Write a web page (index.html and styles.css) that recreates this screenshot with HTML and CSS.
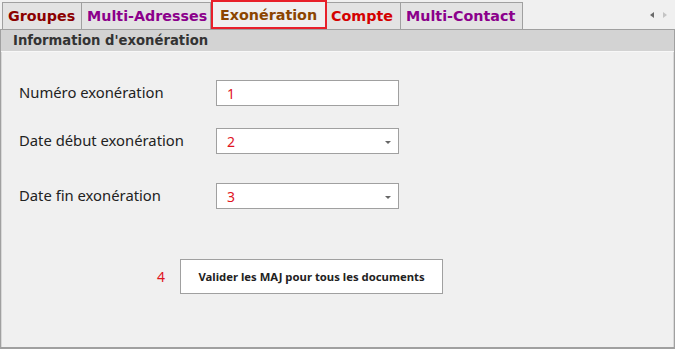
FILE: index.html
```html
<!DOCTYPE html>
<html lang="fr">
<head>
<meta charset="utf-8">
<title>Exonération</title>
<link rel="stylesheet" href="styles.css">
</head>
<body>
<div class="tabbar">
  <div class="tabs">
    <div class="tab t-groupes">Groupes</div>
    <div class="tab t-multi">Multi-Adresses</div>
    <div class="tab tab-active">Exonération</div>
    <div class="tab t-compte">Compte</div>
    <div class="tab t-multi">Multi-Contact</div>
  </div>
  <div class="scroll">
    <span class="arr arr-left"></span>
    <span class="arr arr-right"></span>
  </div>
</div>
<div class="panel">
  <div class="panel-head">Information d'exonération</div>
  <div class="form">
    <div class="row r1">
      <label class="lbl">Numéro exonération</label>
      <div class="field"><span class="val">1</span></div>
    </div>
    <div class="row r2">
      <label class="lbl">Date début exonération</label>
      <div class="field combo"><span class="val">2</span><span class="drop"></span></div>
    </div>
    <div class="row r3">
      <label class="lbl">Date fin exonération</label>
      <div class="field combo"><span class="val">3</span><span class="drop"></span></div>
    </div>
    <div class="btnrow">
      <span class="num">4</span>
      <div class="btn">Valider les MAJ pour tous les documents</div>
    </div>
  </div>
</div>
</body>
</html>
```
FILE: styles.css
```css
html, body {
  margin: 0;
  padding: 0;
  background: #f0f0f0;
  width: 675px;
  height: 349px;
  overflow: hidden;
}
.tabbar {
  display: flex;
  justify-content: space-between;
  height: 29px;
}
.tabs {
  display: flex;
  align-items: flex-end;
  padding-left: 2px;
}
.tab {
  box-sizing: border-box;
  height: 27px;
  border: 1px solid #a0a0a0;
  border-bottom: none;
  border-left: none;
  background: #e3e3e3;
  font-family: "DejaVu Sans", sans-serif;
  font-weight: bold;
  font-size: 14.3px;
  line-height: 26px;
  padding: 0 4px 0 5px;
  white-space: nowrap;
}
.tab:first-child { border-left: 1px solid #a0a0a0; }
.t-groupes { color: #8b0000; width: 80px; }
.t-multi { color: #8b008b; }
.tabs .tab:nth-child(2) { width: 129px; }
.tabs .tab:nth-child(5) { width: 122px; }
.t-compte { color: #d40000; width: 74px; padding-left: 4px; }
.tab-active {
  height: 29px;
  width: 116px;
  border: 2px solid #e8202a;
  background: #f0f0f0;
  color: #8b4500;
  line-height: 27px;
  padding-left: 7px;
}
.scroll {
  display: flex;
  align-items: center;
  gap: 9px;
  padding-right: 8px;
}
.arr {
  width: 0;
  height: 0;
  border-top: 3.5px solid transparent;
  border-bottom: 3.5px solid transparent;
}
.arr-left { border-right: 4px solid #6a6a6a; }
.arr-right { border-left: 4px solid #c4c4c4; }
.panel {
  box-sizing: border-box;
  height: 320px;
  border: 1px solid #a0a0a0;
  border-bottom-width: 2px;
  box-shadow: inset 1px 0 0 #d8d8d8, inset -1px 0 0 #d8d8d8;
  background: #f0f0f0;
}
.panel-head {
  height: 21px;
  background: #d3d3d3;
  border-bottom: 1px solid #f8f8f8;
  font-family: "DejaVu Sans", sans-serif;
  font-weight: bold;
  font-size: 13.2px;
  line-height: 21px;
  color: #333;
  padding-left: 12px;
}
.form {
  padding: 28px 0 0 18px;
  font-family: "Noto Sans", sans-serif;
}
.row {
  display: flex;
  align-items: center;
  height: 26px;
}
.r2 { margin-top: 22px; }
.r3 { margin-top: 29px; }
.lbl {
  width: 197px;
  font-size: 14.8px;
  color: #222;
  margin-top: -2px;
}
.field {
  box-sizing: border-box;
  width: 183px;
  height: 26px;
  border: 1px solid #a0a0a0;
  background: #fff;
  display: flex;
  align-items: center;
  justify-content: space-between;
  padding: 0 7px 0 10px;
}
.val {
  color: #e0141e;
  font-size: 14px;
}
.drop {
  width: 0;
  height: 0;
  border-left: 3px solid transparent;
  border-right: 3px solid transparent;
  border-top: 3px solid #666;
  margin-top: 2px;
}
.btnrow {
  display: flex;
  align-items: center;
  margin-top: 50px;
  padding-left: 120px;
}
.num {
  color: #e0141e;
  font-size: 14px;
  width: 41px;
  padding-left: 18px;
  box-sizing: border-box;
}
.btn {
  box-sizing: border-box;
  width: 263px;
  height: 35px;
  border: 1px solid #a0a0a0;
  background: #fff;
  display: flex;
  align-items: center;
  justify-content: center;
  font-family: "Noto Sans", sans-serif;
  font-weight: bold;
  font-size: 11.3px;
  color: #222;
}
```
